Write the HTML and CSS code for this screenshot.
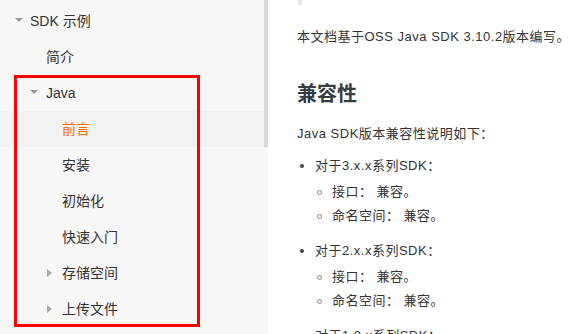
FILE: index.html
```html
<!DOCTYPE html>
<html lang="zh-CN">
<head>
<meta charset="utf-8">
<title>SDK 示例 - Java</title>
<link rel="stylesheet" href="styles.css">
</head>
<body>
<aside class="sidebar">
  <ul class="tree">
    <li class="row lvl0"><span class="caret down"></span><span class="label">SDK 示例</span></li>
    <li class="row lvl1"><span class="caret none"></span><span class="label">简介</span></li>
    <li class="row lvl1"><span class="caret down"></span><span class="label">Java</span></li>
    <li class="row lvl2 active"><span class="caret none"></span><span class="label">前言</span></li>
    <li class="row lvl2"><span class="caret none"></span><span class="label">安装</span></li>
    <li class="row lvl2"><span class="caret none"></span><span class="label">初始化</span></li>
    <li class="row lvl2"><span class="caret none"></span><span class="label">快速入门</span></li>
    <li class="row lvl2"><span class="caret right"></span><span class="label">存储空间</span></li>
    <li class="row lvl2"><span class="caret right"></span><span class="label">上传文件</span></li>
  </ul>
  <div class="scroll"><div class="thumb"></div></div>
  <div class="highlight"></div>
</aside>
<main class="content">
  <div class="topmark"></div>
  <p class="intro">本文档基于OSS Java SDK 3.10.2版本编写。</p>
  <h2 class="title">兼容性</h2>
  <p class="para">Java SDK版本兼容性说明如下：</p>
  <ul class="list">
    <li class="item"><span class="text">对于3.x.x系列SDK：</span>
      <ul class="sub">
        <li class="subitem">接口： 兼容。</li>
        <li class="subitem">命名空间： 兼容。</li>
      </ul>
    </li>
    <li class="item"><span class="text">对于2.x.x系列SDK：</span>
      <ul class="sub">
        <li class="subitem">接口： 兼容。</li>
        <li class="subitem">命名空间： 兼容。</li>
      </ul>
    </li>
    <li class="item"><span class="text">对于1.0.x系列SDK：</span></li>
  </ul>
</main>
</body>
</html>
```
FILE: styles.css
```css
html, body {
  margin: 0;
  padding: 0;
  height: 334px;
  overflow: hidden;
  background: #fff;
}
body {
  display: flex;
  font-family: "Liberation Sans", Arial, "Noto Sans CJK SC", sans-serif;
  color: #333;
}
.sidebar {
  position: relative;
  width: 268px;
  flex: none;
  background: #f7f7f7;
  display: flex;
  height: 334px;
}
.tree {
  list-style: none;
  margin: 0;
  padding: 3px 0 0 0;
  width: 264px;
}
.row {
  height: 36px;
  display: flex;
  align-items: center;
  font-size: 14px;
  line-height: 36px;
  color: #333;
}
.row.active {
  background: #f2f2f2;
}
.row.active .label {
  color: #ff6a00;
}
.lvl0 { padding-left: 15px; }
.lvl1 { padding-left: 30px; }
.lvl2 { padding-left: 46px; }
.caret {
  width: 15px;
  height: 8px;
  flex: none;
}
.lvl1 .caret { width: 16px; }
.lvl2 .caret { width: 16px; }
.caret.down::before {
  content: "";
  display: block;
  width: 0;
  height: 0;
  margin-top: 1px;
  border-left: 4px solid transparent;
  border-right: 4px solid transparent;
  border-top: 4px solid #999;
}
.caret.right::before {
  content: "";
  display: block;
  width: 0;
  height: 0;
  margin-left: 1px;
  border-top: 4px solid transparent;
  border-bottom: 4px solid transparent;
  border-left: 5px solid #aaa;
}
.scroll {
  width: 4px;
  flex: none;
}
.thumb {
  height: 147px;
  background: #d9d9d9;
}
.highlight {
  position: absolute;
  left: 14px;
  top: 75px;
  width: 186px;
  height: 252px;
  box-sizing: border-box;
  border: 3px solid #ff0000;
  pointer-events: none;
}
.content {
  flex: 1;
  padding-left: 29px;
  font-size: 13px;
  color: #333;
}
.topmark {
  width: 4px;
  height: 5px;
  margin-left: 1px;
  background: #e8e8e8;
}
.intro,
.para,
.list {
  letter-spacing: 0.5px;
}
.intro {
  margin: 20px 0 0 0;
  line-height: 24px;
}
.title {
  margin: 30px 0 0 0;
  font-size: 20px;
  line-height: 30px;
  font-weight: bold;
  color: #373d41;
}
.para {
  margin: 13px 0 0 0;
  line-height: 24px;
}
.list {
  list-style: none;
  margin: 8px 0 0 0;
  padding: 0;
}
.item {
  margin-bottom: 11px;
}
.item .text {
  display: flex;
  align-items: center;
  line-height: 24px;
}
.item .text::before {
  content: "";
  width: 4px;
  height: 4px;
  border-radius: 50%;
  background: #444;
  margin-left: 3px;
  margin-right: 11px;
  flex: none;
}
.sub {
  list-style: none;
  margin: 2px 0 0 0;
  padding: 0;
}
.subitem {
  display: flex;
  align-items: center;
  line-height: 24px;
}
.subitem::before {
  content: "";
  width: 3px;
  height: 3px;
  border-radius: 50%;
  border: 1px solid #888;
  margin-left: 20px;
  margin-right: 10px;
  flex: none;
}
```
